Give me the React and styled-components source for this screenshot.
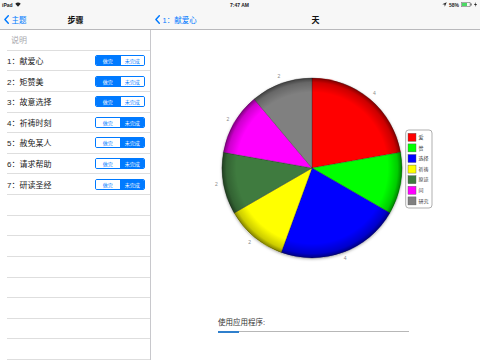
import React from "react";
import styled, { createGlobalStyle } from "styled-components";

const Global = createGlobalStyle`
  html, body { margin: 0; padding: 0; background: #fff; }
  body { font-family: "Liberation Sans", "Noto Sans CJK SC", sans-serif; }
  #root { width: 480px; height: 360px; overflow: hidden; }
`;

const BLUE = "#007aff";

const Screen = styled.div`
  width: 480px;
  height: 360px;
  display: flex;
  flex-direction: column;
  overflow: hidden;
`;

const TopBar = styled.div`
  height: 29px;
  background: #f7f7f7;
  border-bottom: 1px solid #b9b9bc;
  display: flex;
  flex-direction: column;
`;

const StatusBar = styled.div`
  height: 9.5px;
  display: grid;
  grid-template-columns: 1fr auto 1fr;
  align-items: center;
  padding: 0 3px 0 2px;
  font-size: 5px;
  font-weight: 700;
  color: #222;
`;

const StatusLeft = styled.div`
  display: flex;
  align-items: center;
  gap: 2px;
`;

const StatusRight = styled.div`
  display: flex;
  align-items: center;
  justify-content: flex-end;
  gap: 2px;
`;

const NavRow = styled.div`
  flex: 1;
  display: flex;
`;

const NavSide = styled.div`
  width: ${(p) => p.$w || "auto"};
  flex: ${(p) => (p.$w ? "none" : 1)};
  display: grid;
  grid-template-columns: 1fr auto 1fr;
  align-items: center;
  padding: 0 4px;
  box-sizing: border-box;
`;

const BackButton = styled.div`
  display: flex;
  align-items: center;
  gap: 2.5px;
  color: ${BLUE};
  font-size: 7.5px;
  white-space: nowrap;
`;

const NavTitle = styled.div`
  font-size: 8px;
  font-weight: 700;
  color: #111;
`;

const Body = styled.div`
  flex: 1;
  display: flex;
  min-height: 0;
`;

const LeftPanel = styled.div`
  width: 150px;
  border-right: 1px solid #c8c8cc;
  display: flex;
  flex-direction: column;
  overflow: hidden;
`;

const Row = styled.div`
  flex: none;
  height: 19.625px;
  margin-left: 7px;
  padding-right: 5px;
  border-bottom: 1px solid #dedede;
  display: flex;
  align-items: center;
  justify-content: space-between;
  font-size: 8px;
  color: ${(p) => (p.$header ? "#a8a8ad" : "#222")};
  padding-left: ${(p) => (p.$header ? "4px" : "0")};
`;

const Segmented = styled.div`
  display: flex;
  width: 50px;
  height: 11px;
  box-sizing: border-box;
  border: 1px solid ${BLUE};
  border-radius: 2px;
  overflow: hidden;
`;

const Segment = styled.div`
  flex: 1;
  display: flex;
  align-items: center;
  justify-content: center;
  font-size: 5px;
  background: ${(p) => (p.$on ? BLUE : "#fff")};
  color: ${(p) => (p.$on ? "#fff" : BLUE)};
  & + & { border-left: 1px solid ${BLUE}; }
`;

const RightPanel = styled.div`
  flex: 1;
  display: flex;
  flex-direction: column;
`;

const ChartArea = styled.div`
  height: 283px;
`;

const Footer = styled.div`
  padding-left: 67px;
  padding-top: 5px;
`;

const FooterLabel = styled.div`
  font-size: 7.5px;
  line-height: 10px;
  color: #333;
`;

const Track = styled.div`
  margin-top: 3px;
  width: 191px;
  height: 1px;
  background: #b7b7b7;
  display: flex;
  align-items: center;
`;

const Fill = styled.div`
  height: 2px;
  background: #2f7fcc;
`;

const steps = [
  { t: "1：献爱心", done: true },
  { t: "2：矩赞美", done: true },
  { t: "3：故意选择", done: true },
  { t: "4：祈祷时刻", done: false },
  { t: "5：赦免某人", done: false },
  { t: "6：请求帮助", done: false },
  { t: "7：研读圣经", done: false },
];

const slices = [
  { v: 4, c: "#ff0000", n: "爱" },
  { v: 2, c: "#00ff00", n: "赞" },
  { v: 4, c: "#0000ff", n: "选择" },
  { v: 2, c: "#ffff00", n: "祈祷" },
  { v: 2, c: "#3f7b3f", n: "原谅" },
  { v: 2, c: "#ff00ff", n: "问" },
  { v: 2, c: "#808080", n: "研究" },
];

const Chevron = () => (
  <svg width="5" height="9" viewBox="0 0 5 9">
    <path d="M4.3 0.7 L0.9 4.5 L4.3 8.3" fill="none" stroke={BLUE} strokeWidth="1.4" strokeLinecap="round" strokeLinejoin="round" />
  </svg>
);

function Pie() {
  const cx = 161, cy = 138, r = 90;
  const total = slices.reduce((s, x) => s + x.v, 0);
  let a0 = 0;
  const pt = (a, rr) => [cx + rr * Math.sin(a), cy - rr * Math.cos(a)];
  const parts = slices.map((s) => {
    const a1 = a0 + (s.v / total) * Math.PI * 2;
    const [x0, y0] = pt(a0, r);
    const [x1, y1] = pt(a1, r);
    const large = a1 - a0 > Math.PI ? 1 : 0;
    const d = `M${cx} ${cy} L${x0} ${y0} A${r} ${r} 0 ${large} 1 ${x1} ${y1} Z`;
    const [lx, ly] = pt((a0 + a1) / 2, 97);
    a0 = a1;
    return { ...s, d, lx, ly };
  });
  return (
    <svg width="329" height="283" viewBox="0 0 329 283">
      <defs>
        <radialGradient id="rim" cx="50%" cy="50%" r="50%">
          <stop offset="0.84" stopColor="#000" stopOpacity="0" />
          <stop offset="0.95" stopColor="#000" stopOpacity="0.2" />
          <stop offset="1" stopColor="#000" stopOpacity="0.5" />
        </radialGradient>
        <filter id="sh" x="-20%" y="-20%" width="140%" height="140%">
          <feDropShadow dx="0" dy="1" stdDeviation="1.6" floodColor="#000" floodOpacity="0.35" />
        </filter>
      </defs>
      <circle cx={cx} cy={cy} r={r} fill="#fff" filter="url(#sh)" />
      {parts.map((p) => (
        <path key={p.n} d={p.d} fill={p.c} stroke="#222" strokeOpacity="0.6" strokeWidth="0.5" />
      ))}
      <circle cx={cx} cy={cy} r={r} fill="url(#rim)" />
      {parts.map((p) => (
        <text key={p.n + "l"} x={p.lx} y={p.ly} fontSize="5" fill="#8a8a8a" textAnchor="middle" dominantBaseline="middle" fontFamily="Liberation Sans, sans-serif">
          {p.v}
        </text>
      ))}
      <rect x="254.7" y="100" width="26.3" height="78" rx="3" fill="#fff" stroke="#8c8c8c" strokeWidth="0.7" />
      {slices.map((s, i) => {
        const y = 107.3 + i * 10.6;
        return (
          <g key={s.n + "g"}>
            <rect x="257" y={y - 4} width="8" height="8" fill={s.c} stroke="#555" strokeWidth="0.4" />
            <text x="267.5" y={y + 0.3} fontSize="5" fill="#333" dominantBaseline="middle" fontFamily="Noto Sans CJK SC, sans-serif">
              {s.n}
            </text>
          </g>
        );
      })}
    </svg>
  );
}

export default function App() {
  return (
    <Screen>
      <Global />
      <TopBar>
        <StatusBar>
          <StatusLeft>
            <span>iPad</span>
            <svg width="6" height="5" viewBox="0 0 12 9">
              <path d="M6 9 L0.5 3.2 A8 8 0 0 1 11.5 3.2 Z" fill="#222" />
            </svg>
          </StatusLeft>
          <span>7:47 AM</span>
          <StatusRight>
            <svg width="5" height="5" viewBox="0 0 10 10">
              <path d="M9.5 0.5 L0.5 4.5 L5 5 L5.5 9.5 Z" fill="#222" />
            </svg>
            <span>58%</span>
            <svg width="11" height="5" viewBox="0 0 22 10">
              <rect x="0.5" y="0.5" width="18" height="9" rx="1.5" fill="none" stroke="#222" />
              <rect x="2" y="2" width="10" height="6" fill="#4cd964" />
              <rect x="19.5" y="3" width="1.5" height="4" fill="#222" />
            </svg>
            <svg width="3" height="5" viewBox="0 0 6 10">
              <path d="M4 0 L0 6 L3 6 L2 10 L6 4 L3 4 Z" fill="#222" />
            </svg>
          </StatusRight>
        </StatusBar>
        <NavRow>
          <NavSide $w="151px">
            <BackButton>
              <Chevron />
              <span>主题</span>
            </BackButton>
            <NavTitle>步骤</NavTitle>
            <span />
          </NavSide>
          <NavSide>
            <BackButton>
              <Chevron />
              <span>1：献爱心</span>
            </BackButton>
            <NavTitle>天</NavTitle>
            <span />
          </NavSide>
        </NavRow>
      </TopBar>
      <Body>
        <LeftPanel>
          <Row $header>说明</Row>
          {steps.map((s) => (
            <Row key={s.t}>
              <span>{s.t}</span>
              <Segmented>
                <Segment $on={s.done}>做完</Segment>
                <Segment $on={!s.done}>未完成</Segment>
              </Segmented>
            </Row>
          ))}
          {Array.from({ length: 9 }).map((_, i) => (
            <Row key={"e" + i} />
          ))}
        </LeftPanel>
        <RightPanel>
          <ChartArea>
            <Pie />
          </ChartArea>
          <Footer>
            <FooterLabel>使用应用程序:</FooterLabel>
            <Track>
              <Fill style={{ width: "21px" }} />
            </Track>
          </Footer>
        </RightPanel>
      </Body>
    </Screen>
  );
}
